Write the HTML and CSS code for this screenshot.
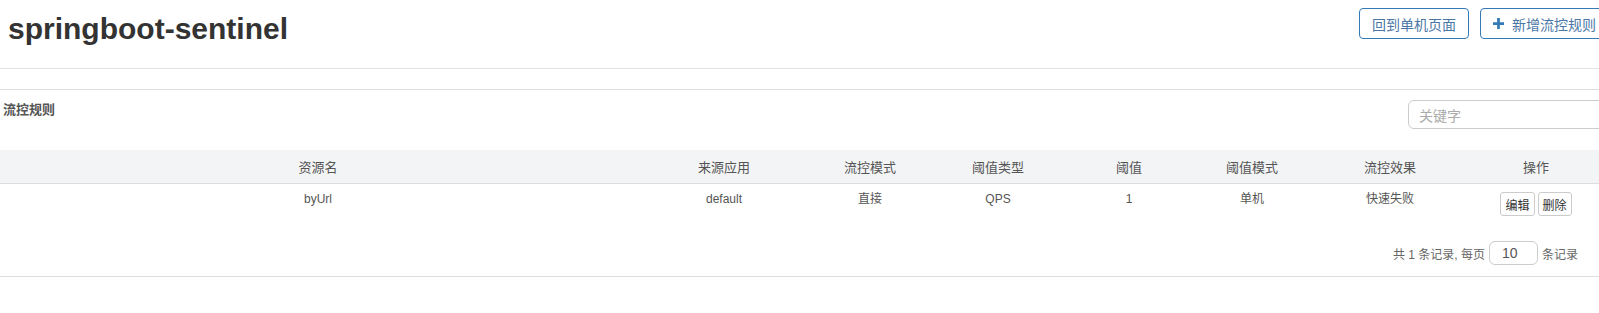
FILE: index.html
```html
<!DOCTYPE html>
<html lang="zh-CN">
<head>
  <meta charset="UTF-8" />
  <meta name="viewport" content="width=device-width, initial-scale=1.0"/>
  <title>springboot-sentinel | 流控规则</title>
  <link rel="stylesheet" href="styles.css">
</head>
<body>

  <div class="page">
    <div class="header">
      <h1>springboot-sentinel</h1>
      <div class="header-actions">
        <button class="btn-outline">回到单机页面</button>
        <button class="btn-outline">
          <svg class="plus-icon" viewBox="0 0 12 12" width="12" height="12">
            <path d="M4.5 0h3v4.5H12v3H7.5V12h-3V7.5H0v-3h4.5z" fill="#337ab7"/>
          </svg>
          新增流控规则
        </button>
      </div>
    </div>

    <div class="panel">
      <div class="panel-heading">
        <span class="panel-title">流控规则</span>
        <input class="search-input" type="text" placeholder="关键字">
      </div>

      <table>
        <colgroup>
          <col style="width:636px">
          <col style="width:176px">
          <col style="width:116px">
          <col style="width:140px">
          <col style="width:122px">
          <col style="width:124px">
          <col style="width:152px">
          <col style="width:140px">
        </colgroup>
        <thead>
          <tr>
            <th>资源名</th>
            <th>来源应用</th>
            <th>流控模式</th>
            <th>阈值类型</th>
            <th>阈值</th>
            <th>阈值模式</th>
            <th>流控效果</th>
            <th>操作</th>
          </tr>
        </thead>
        <tbody>
          <tr>
            <td>byUrl</td>
            <td>default</td>
            <td>直接</td>
            <td>QPS</td>
            <td>1</td>
            <td>单机</td>
            <td>快速失败</td>
            <td>
              <div class="row-actions">
                <button class="btn-small">编辑</button>
                <button class="btn-small">删除</button>
              </div>
            </td>
          </tr>
        </tbody>
      </table>

      <div class="pagination">
        共 1 条记录, 每页
        <input class="page-size" type="text" value="10">
        条记录
      </div>
    </div>
  </div>

</body>
</html>
```

FILE: styles.css
```css
html {
  overflow: hidden;
}

body {
  margin: 0;
  background: #fff;
  color: #333;
  font-family: "Liberation Sans", Arial, "Noto Sans CJK SC", sans-serif;
}

.page {
  width: 1610px;
}

.header {
  display: flex;
  justify-content: space-between;
  align-items: flex-start;
  height: 60px;
  padding: 8px 1px 0 8px;
  border-bottom: 1px solid #e3e3e3;
}

.header h1 {
  margin: 4px 0 0;
  font-size: 30px;
  line-height: 34px;
  font-weight: bold;
  color: #333;
}

.header-actions {
  display: flex;
  gap: 11px;
}

.btn-outline {
  display: flex;
  align-items: center;
  gap: 8px;
  height: 31px;
  padding: 0 12px;
  background: #fff;
  border: 1px solid #337ab7;
  border-radius: 4px;
  color: #4a77a6;
  font-family: "Noto Sans CJK SC", sans-serif;
  font-size: 14px;
  cursor: pointer;
}

.plus-icon {
  width: 11px;
  height: 11px;
}

.panel {
  margin-top: 20px;
  border-top: 1px solid #ddd;
  border-bottom: 1px solid #ddd;
  width: 1606px;
}

.panel-heading {
  display: flex;
  justify-content: space-between;
  align-items: flex-start;
  padding: 10px 0 0 3px;
}

.panel-title {
  font-family: "Noto Sans CJK SC", sans-serif;
  font-size: 13px;
  line-height: 18px;
  font-weight: bold;
  color: #555;
}

.search-input {
  box-sizing: border-box;
  width: 198px;
  height: 29px;
  padding: 0 10px;
  border: 1px solid #ccc;
  border-radius: 6px;
  font-family: "Noto Sans CJK SC", sans-serif;
  font-size: 14px;
  color: #555;
  outline: none;
}

.search-input::placeholder {
  color: #aaa;
}

table {
  margin-top: 21px;
  width: 1606px;
  border-collapse: collapse;
  table-layout: fixed;
  font-size: 12px;
}

th, td {
  text-align: center;
  font-weight: normal;
}

th {
  padding: 8px 8px 7px;
  background: #f3f4f6;
  border-bottom: 1px solid #ddd;
  color: #555;
  font-family: "Noto Sans CJK SC", sans-serif;
  font-size: 13px;
  line-height: 18px;
}

td {
  padding: 6px 8px;
  vertical-align: top;
  line-height: 18px;
  color: #555;
  font-family: "Liberation Sans", Arial, "Noto Sans CJK SC", sans-serif;
}

.row-actions {
  display: flex;
  justify-content: center;
  gap: 3px;
  margin-top: 2px;
}

.btn-small {
  box-sizing: border-box;
  height: 24px;
  padding: 0 4px;
  background: #fff;
  border: 1px solid #ccc;
  border-radius: 3px;
  color: #333;
  font-family: "Noto Sans CJK SC", sans-serif;
  font-size: 12px;
  cursor: pointer;
}

.pagination {
  display: flex;
  justify-content: flex-end;
  align-items: center;
  padding: 19px 28px 11px 0;
  font-family: "Liberation Sans", Arial, "Noto Sans CJK SC", sans-serif;
  font-size: 12px;
  color: #666;
}

.page-size {
  box-sizing: border-box;
  width: 49px;
  height: 24px;
  margin: 0 4px;
  padding: 0 12px;
  border: 1px solid #ccc;
  border-radius: 6px;
  font-family: "Liberation Sans", Arial, sans-serif;
  font-size: 14px;
  color: #555;
}
```
